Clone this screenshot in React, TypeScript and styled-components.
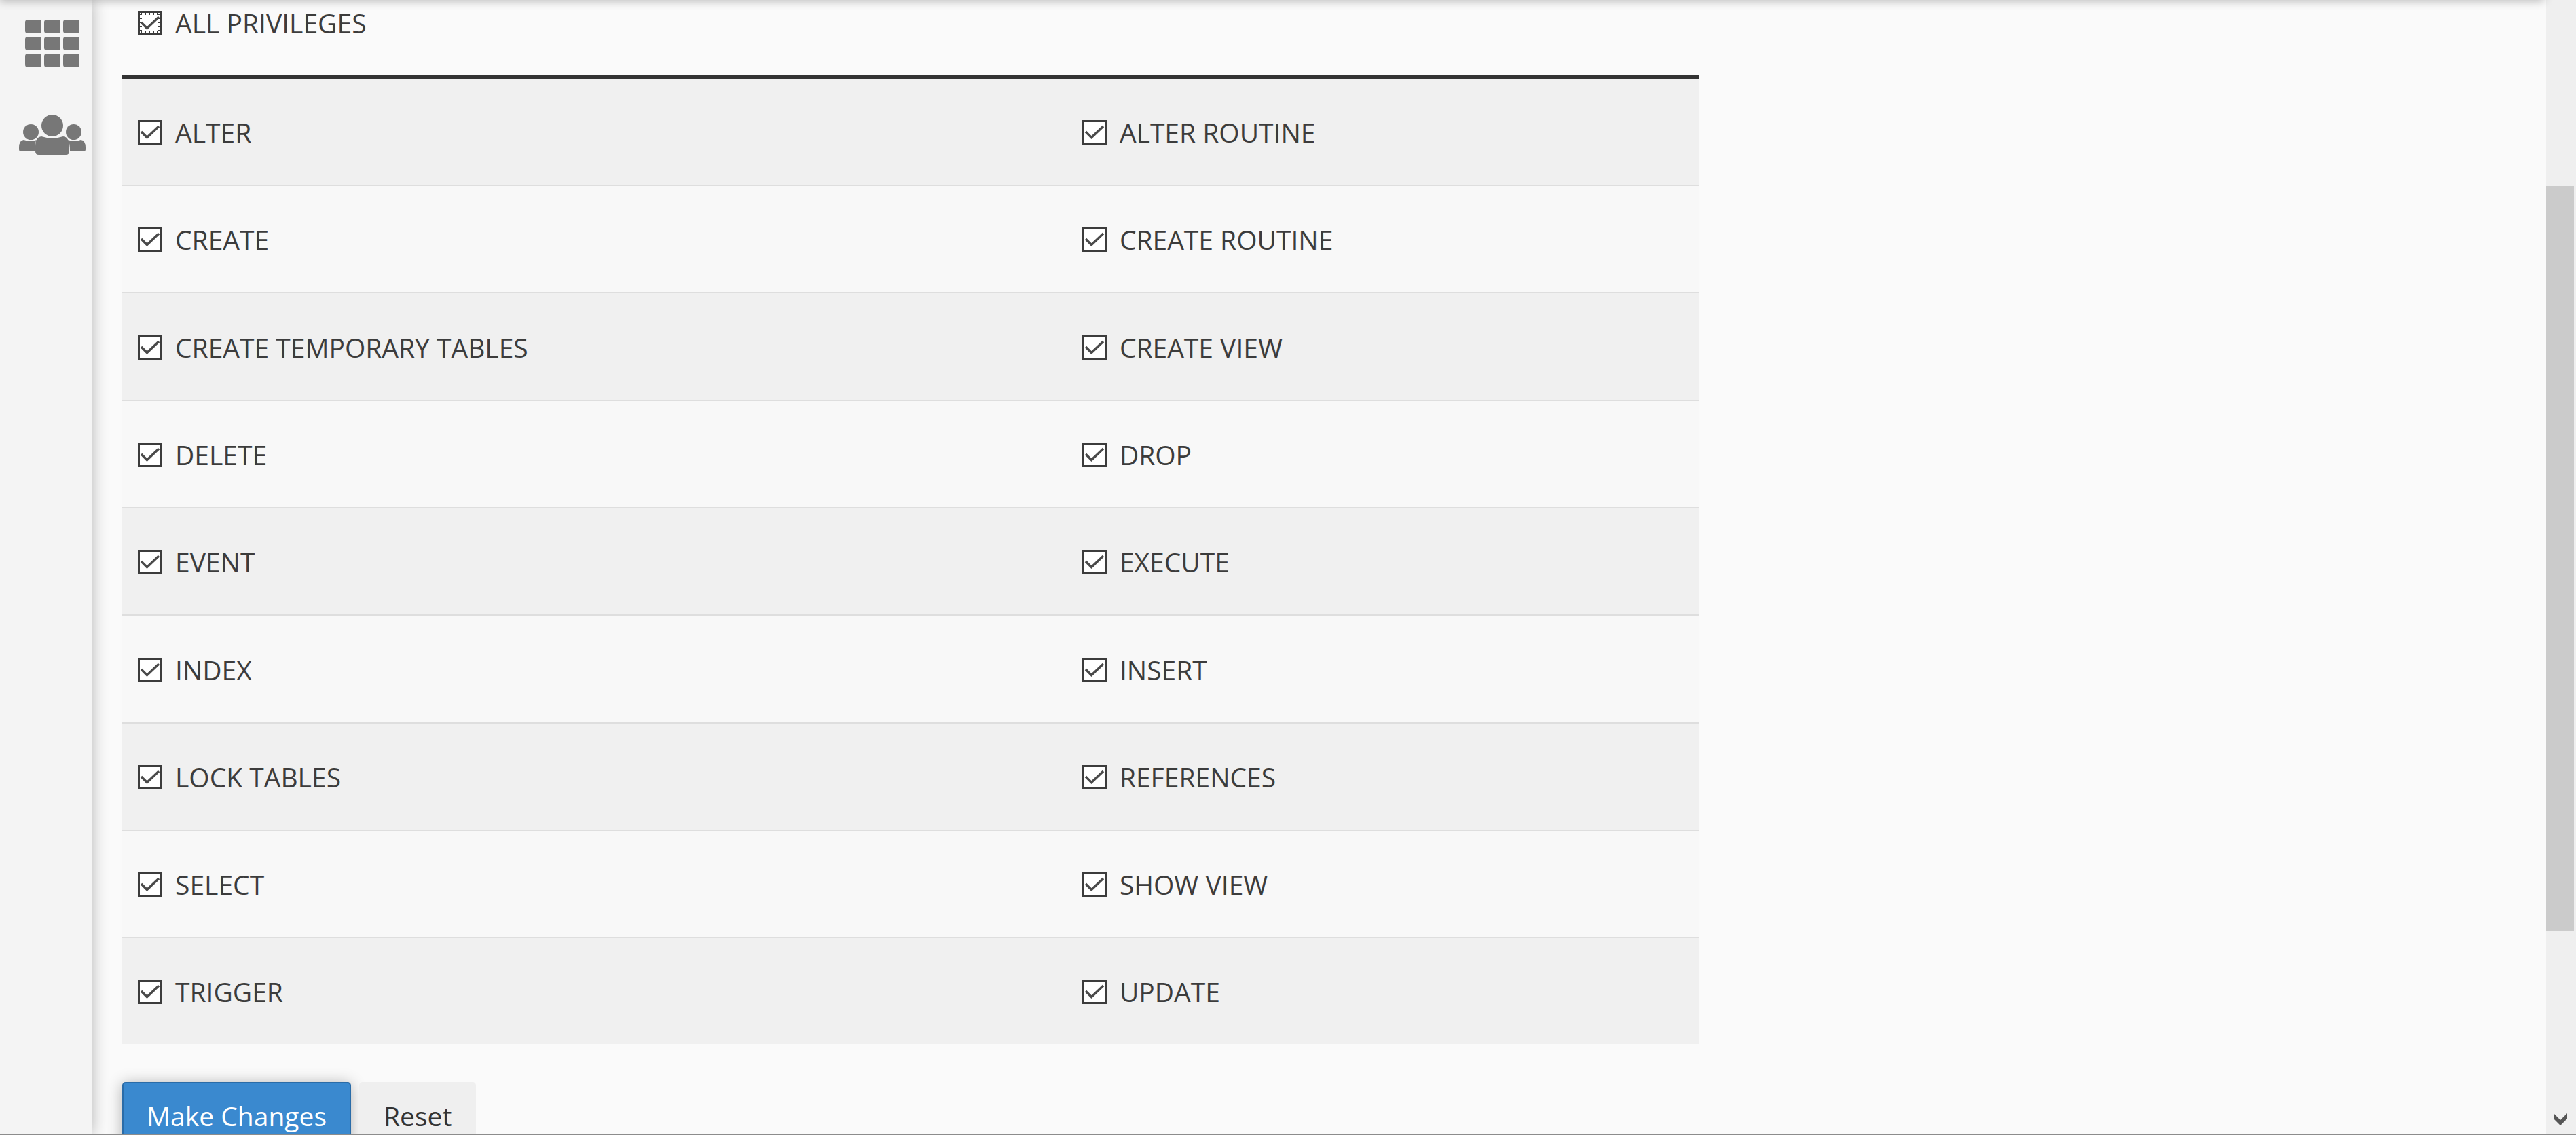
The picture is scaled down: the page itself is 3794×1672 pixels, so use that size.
import React from "react";
import styled, { createGlobalStyle } from "styled-components";

const Global = createGlobalStyle`
  * { box-sizing: border-box; }
  body {
    margin: 0;
    background: #fafafa;
    color: #3c3c3c;
    font: 39px/56px "Open Sans", "Noto Sans", sans-serif;
  }
`;

const Shell = styled.div`
  position: relative;
  display: flex;
  height: 100vh;
  overflow: hidden;
  border-bottom: 1px solid #8c8c8c;
`;

const HeaderShadow = styled.div`
  position: absolute;
  z-index: 3;
  top: -10px;
  left: 0;
  right: 48px;
  height: 10px;
  box-shadow: 0 0 14px 1px rgba(0, 0, 0, 0.3);
`;

const Sidebar = styled.nav`
  flex: none;
  z-index: 1;
  display: flex;
  flex-direction: column;
  align-items: center;
  gap: 70px;
  width: 136px;
  padding: 29px 0 0 17px;
  background: #f4f4f4;
  box-shadow: 0 0 22px rgba(0, 0, 0, 0.28);
`;

const NavLink = styled.a`
  display: block;
  color: #777;

  svg {
    display: block;
    fill: currentColor;
  }
`;

const Main = styled.main`
  flex: 1;
  min-width: 0;
  padding: 0 87px 0 44px;
`;

const Form = styled.form`
  width: 66.667%;
`;

const Table = styled.table`
  width: 100%;
  table-layout: fixed;
  border-collapse: separate;
  border-spacing: 0;
`;

const FirstColumn = styled.col`
  width: 59.9%;
`;

const HeadCell = styled.th`
  height: 116px;
  padding: 6px 23px 0;
  border-bottom: 6px solid #333;
  font-weight: 400;
  text-align: left;
  vertical-align: top;
`;

const Row = styled.tr`
  height: 158px;
  background: #f0f0f0;

  &:nth-child(even) {
    background: #f8f8f8;
  }

  &:nth-child(3n) {
    height: 159px;
  }

  &:last-child {
    height: 156px;
  }
`;

const Cell = styled.td`
  padding: 2px 23px 0;
  border-bottom: 2px solid #dedede;

  ${Row}:last-child & {
    border-bottom: 0;
  }
`;

const Option = styled.label`
  display: flex;
  align-items: center;
  gap: 19px;
`;

const Box = styled.span`
  display: grid;
  flex: none;
  width: 36px;
  height: 36px;

  > * {
    grid-area: 1 / 1;
  }

  svg {
    pointer-events: none;
  }

  .tick {
    opacity: 0;
  }

  input:checked + svg .tick {
    opacity: 1;
  }
`;

const Check = styled.input`
  appearance: none;
  width: 36px;
  height: 36px;
  margin: 0;
  border: 3px solid #3c3c3c;
  background: #fff;
  outline: none;
`;

const Actions = styled.div`
  display: flex;
  gap: 12px;
  margin-top: 56px;
`;

const Button = styled.button<{ $primary?: boolean }>`
  height: 100px;
  padding: 0 34px;
  border: 2px solid ${(p) => (p.$primary ? "#2a6ca8" : "#efefef")};
  border-radius: 5px;
  background: ${(p) => (p.$primary ? "#3a89cf" : "#efefef")};
  box-shadow: ${(p) => (p.$primary ? "0 2px 22px rgba(0, 0, 0, 0.3)" : "none")};
  color: ${(p) => (p.$primary ? "#fff" : "#333")};
  font: inherit;
`;

const Scrollbar = styled.div`
  flex: none;
  display: flex;
  flex-direction: column;
  width: 44px;
  padding-right: 3px;
  background: #efefef;
`;

const Before = styled.div`
  flex: 274;
`;

const Thumb = styled.div`
  flex: 1098;
  background: #cbcbcb;
`;

const After = styled.div`
  flex: 286;
  display: flex;
  align-items: flex-end;
  justify-content: center;
  padding-bottom: 13px;
`;

function Privilege({ name, focused }: { name: string; focused?: boolean }) {
  return (
    <Option>
      <Box>
        <Check type="checkbox" name={name} defaultChecked />
        <svg width="36" height="36" viewBox="0 0 36 36" aria-hidden="true">
          {focused && (
            <path
              d="M3 4.500H33M3 31.500H33M4.500 3V33M31.500 3V33"
              fill="none"
              stroke="#3c3c3c"
              strokeWidth="3"
              strokeDasharray="2 4"
              strokeDashoffset="-1"
            />
          )}
          <path className="tick" d="M5 17l8.500 8.500L31 9" fill="none" stroke="#4a4a4a" strokeWidth="3.500" />
        </svg>
      </Box>
      {name}
    </Option>
  );
}

const rows = [
  ["ALTER", "ALTER ROUTINE"],
  ["CREATE", "CREATE ROUTINE"],
  ["CREATE TEMPORARY TABLES", "CREATE VIEW"],
  ["DELETE", "DROP"],
  ["EVENT", "EXECUTE"],
  ["INDEX", "INSERT"],
  ["LOCK TABLES", "REFERENCES"],
  ["SELECT", "SHOW VIEW"],
  ["TRIGGER", "UPDATE"],
];

const tiles = [0, 1, 2];

export default function App() {
  return (
    <>
      <Global />
      <Shell>
        <HeaderShadow />
        <Sidebar>
          <NavLink href="#home" aria-label="Home">
            <svg width="80" height="70" viewBox="0 0 80 70">
              {tiles.map((r) =>
                tiles.map((c) => (
                  <rect key={`${r}${c}`} x={c * 28} y={r * 25} width="24" height="20" rx="4" />
                ))
              )}
            </svg>
          </NavLink>
          <NavLink href="#users" aria-label="Users">
            <svg width="98" height="60" viewBox="0 0 98 60">
              <circle cx="17.500" cy="25.500" r="11.500" />
              <circle cx="80.500" cy="25.500" r="11.500" />
              <path d="M0 48q0-10 7-11q10 4 19 0q-3 4-3 17H3q-3 0-3-3z" />
              <path d="M98 48q0-10-7-11q-10 4-19 0q3 4 3 17h20q3 0 3-3z" />
              <circle cx="49" cy="16" r="16" />
              <path d="M24 47q0-14 9-15q16 5 32 0q9 1 9 15v7q0 5-5 5H29q-5 0-5-5z" />
            </svg>
          </NavLink>
        </Sidebar>
        <Main>
          <Form>
            <Table>
              <colgroup>
                <FirstColumn />
                <col />
              </colgroup>
              <thead>
                <tr>
                  <HeadCell colSpan={2}>
                    <Privilege name="ALL PRIVILEGES" focused />
                  </HeadCell>
                </tr>
              </thead>
              <tbody>
                {rows.map(([left, right]) => (
                  <Row key={left}>
                    <Cell>
                      <Privilege name={left} />
                    </Cell>
                    <Cell>
                      <Privilege name={right} />
                    </Cell>
                  </Row>
                ))}
              </tbody>
            </Table>
            <Actions>
              <Button type="submit" $primary>
                Make Changes
              </Button>
              <Button type="reset">Reset</Button>
            </Actions>
          </Form>
        </Main>
        <Scrollbar>
          <Before />
          <Thumb />
          <After>
            <svg width="20" height="18" viewBox="0 0 20 18" aria-hidden="true">
              <path d="M0 0l10 10L20 0v8L10 18L0 8z" fill="#555" />
            </svg>
          </After>
        </Scrollbar>
      </Shell>
    </>
  );
}
